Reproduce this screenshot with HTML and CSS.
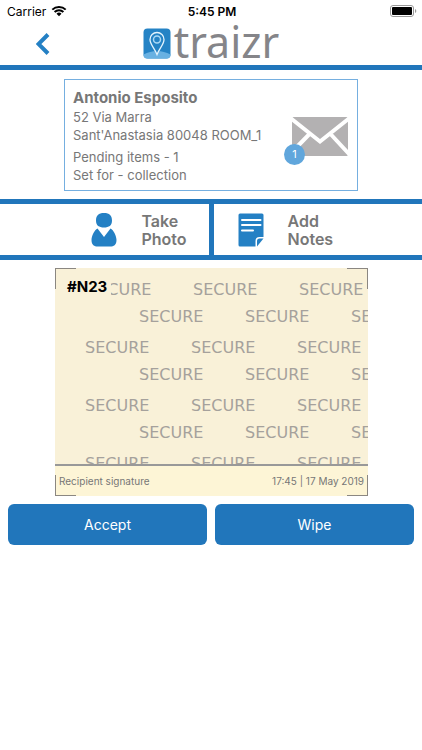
FILE: index.html
```html
<!DOCTYPE html>
<html lang="en">
<head>
<meta charset="utf-8">
<meta name="viewport" content="width=device-width, initial-scale=1">
<title>traizr</title>
<link rel="stylesheet" href="styles.css">
</head>
<body>
<div class="status">
  <div class="carrier">Carrier
    <svg width="16" height="12" viewBox="0 0 16 12" aria-hidden="true"><path d="M1.300 4.600a9.600 9.600 0 0 1 13.400 0M3.600 7a6.300 6.300 0 0 1 8.800 0" fill="none" stroke="#000" stroke-width="2"/><path d="M8 11.300 5.500 8.800a3.600 3.600 0 0 1 5 0z"/></svg>
  </div>
  <div class="clock">5:45 PM</div>
  <div class="battery">
    <svg width="27" height="12" viewBox="0 0 27 12" aria-hidden="true"><rect x=".5" y=".5" width="23" height="11" rx="2.500" fill="#fff" stroke="#999"/><rect x="2" y="2" width="20" height="8" rx="1"/><path d="M25 4v4q1.300-.5 1.300-2T25 4" fill="#999"/></svg>
  </div>
</div>
<header class="header">
  <button class="back" type="button" aria-label="Back">
    <svg width="14" height="22" viewBox="0 0 14 22" aria-hidden="true"><path d="M12 1.500 2.500 11 12 20.500" fill="none" stroke="#2480c4" stroke-width="4"/></svg>
  </button>
  <div class="brand">
    <svg width="28" height="31" viewBox="0 0 28 31" aria-hidden="true"><rect x=".5" y=".5" width="27" height="30" rx="4" fill="#2583c5"/><path d="M.5 26.500Q7 23 14 23t13.500 3.500a4 4 0 0 1-4 4h-19a4 4 0 0 1-4-4z" fill="#69b1e2"/><path d="M14 26.500C11.500 20 7 16.500 7 11.500a7 7 0 0 1 14 0c0 5-4.500 8.500-7 15z" fill="#2583c5" stroke="#e5f4fd" stroke-width="1.300"/><circle cx="14" cy="11.500" r="3.500" fill="#2583c5" stroke="#a9d8f5" stroke-width="1.500"/></svg>
    <span class="brand-name">traizr</span>
  </div>
</header>
<main>
  <section class="card">
    <div class="details">
      <h1>Antonio Esposito</h1>
      <p>52 Via Marra</p>
      <p>Sant'Anastasia 80048 ROOM_1</p>
      <p class="pending">Pending items - 1</p>
      <p>Set for - collection</p>
    </div>
    <div class="mail">
      <svg width="56" height="39" viewBox="0 0 56 39" aria-hidden="true"><rect width="56" height="39" rx="1.500" fill="#b3b1b2"/><path d="M-1 1.500 28 24.500 57 1.500M17.500 17-1 36M38.500 17 58 38" fill="none" stroke="#fff" stroke-width="4"/></svg>
      <span class="badge">1</span>
    </div>
  </section>
  <nav class="actions">
    <button type="button">
      <svg width="26" height="34" viewBox="0 0 26 34" aria-hidden="true"><path d="M13 0c5.500 0 8 2.500 8 7.500S18 14.500 13 14.500 5 12.500 5 7.500 7.500 0 13 0M6.500 15.500 13 24l6.500-8.500c3 1.500 6 7.500 6 11.500 0 5-3 6.500-6 6.500h-13c-3 0-6-1.500-6-6.500 0-4 3-10 6-11.500" fill="#2480c4"/></svg>
      <span class="label">Take<br>Photo</span>
    </button>
    <button type="button">
      <svg width="26" height="34" viewBox="0 0 26 34" aria-hidden="true"><path d="M2 .5h22a1.500 1.500 0 0 1 1.500 1.500v22h-4q-4 0-4 4v5.500H2A1.500 1.500 0 0 1 .5 32V2A1.500 1.500 0 0 1 2 .5M25.500 25.500l-6.500 8V28q0-2.500 2.500-2.500z" fill="#2480c4"/><path d="M4 7h18.500M4 12h18.500M4 17.500h11" stroke="#fff" stroke-width="2" stroke-linecap="round"/></svg>
      <span class="label">Add<br>Notes</span>
    </button>
  </nav>
  <section class="pad" aria-label="Signature">
    <div class="canvas">
      <div class="row r1"><span>SECURE</span><span>SECURE</span><span>SECURE</span></div>
      <div class="row even"><span>SECURE</span><span>SECURE</span><span>SECURE</span></div>
      <div class="row"><span>SECURE</span><span>SECURE</span><span>SECURE</span></div>
      <div class="row even"><span>SECURE</span><span>SECURE</span><span>SECURE</span></div>
      <div class="row"><span>SECURE</span><span>SECURE</span><span>SECURE</span></div>
      <div class="row even"><span>SECURE</span><span>SECURE</span><span>SECURE</span></div>
      <div class="row"><span>SECURE</span><span>SECURE</span><span>SECURE</span></div>
      <strong class="tag">#N23</strong>
    </div>
    <div class="caption"><span>Recipient signature</span><span>17:45 | 17 May 2019</span></div>
    <i class="corner tl"></i><i class="corner tr"></i><i class="corner bl"></i><i class="corner br"></i>
  </section>
  <div class="buttons">
    <button type="button">Accept</button>
    <button type="button">Wipe</button>
  </div>
</main>
</body>
</html>
```
FILE: styles.css
```css
* { box-sizing: border-box; }
body {
  margin: 0;
  background: #fff;
  color: #777;
  font-family: Inter, "Liberation Sans", sans-serif;
  font-size: 13px;
}
button { font: inherit; border: 0; padding: 0; cursor: pointer; }
h1, p { margin: 0; }
svg { display: block; flex: none; }

.status {
  display: grid;
  grid-template-columns: 1fr auto 1fr;
  align-items: center;
  height: 22px;
  padding: 0 5px 0 7px;
  color: #000;
  font-size: 12px;
}
.carrier { display: flex; align-items: center; gap: 5px; }
.clock { font-weight: 600; }
.battery { justify-self: end; }

.header {
  display: grid;
  grid-template-columns: 1fr auto 1fr;
  align-items: center;
  height: 48px;
  border-bottom: 5px solid #2176bb;
}
.back { justify-self: start; margin-left: 36px; background: none; }
.brand { display: flex; align-items: center; gap: 3px; }
.brand-name {
  padding-bottom: 4px;
  color: #858589;
  font-family: "Noto Sans", sans-serif;
  font-size: 43px;
  line-height: 38px;
}

.card {
  display: flex;
  justify-content: space-between;
  align-items: center;
  margin: 9px 64px 8px;
  padding: 8px 9px 6px 8px;
  border: 1px solid #75afe0;
}
.details { line-height: 18px; white-space: nowrap; }
.details h1 { font-size: 15px; line-height: 20px; font-weight: 700; }
.pending { margin-top: 4px; }
.mail { position: relative; }
.badge {
  position: absolute;
  left: -8px;
  bottom: -9px;
  width: 21px;
  border-radius: 50%;
  background: #60a6dc;
  color: #fff;
  font-size: 11px;
  line-height: 21px;
  text-align: center;
}

.actions {
  display: grid;
  grid-template-columns: 1fr 1fr;
  gap: 5px;
  padding: 5px 0;
  background: #2176bb;
}
.actions button {
  display: flex;
  align-items: center;
  gap: 24px;
  height: 51px;
  padding-left: 24px;
  background: #fff;
  color: #777;
  font-size: 16px;
  line-height: 18px;
  font-weight: 600;
  text-align: left;
}
.actions button:first-child { justify-content: flex-end; padding-right: 22px; }

.pad { position: relative; margin: 8px 54px 8px 55px; background: #fdf5d6; }
.canvas {
  position: relative;
  height: 198px;
  overflow: hidden;
  padding-top: 7px;
  border-bottom: 2px solid #999;
  background: #f9f1d8;
}
.row {
  display: flex;
  height: 29px;
  padding-left: 30px;
  color: #a5a19c;
  font-family: "DejaVu Sans", sans-serif;
  font-size: 16px;
  line-height: 30px;
}
.row span { flex: none; width: 106px; }
.row.r1 { padding-left: 32px; }
.row.even { padding-left: 84px; line-height: 26px; }
.tag {
  position: absolute;
  left: 8px;
  top: 7px;
  padding: 0 4px;
  background: #f9f1d8;
  color: #000;
  font-size: 15px;
  line-height: 24px;
  font-weight: 700;
}
.caption {
  display: flex;
  justify-content: space-between;
  padding: 0 4px;
  font-size: 10px;
  line-height: 30px;
}
.corner { position: absolute; width: 21px; height: 21px; border: 0 solid #8b8781; }
.tl { top: 0; left: 0; border-width: 1px 0 0 1px; }
.tr { top: 0; right: 0; border-width: 1px 1px 0 0; }
.bl { bottom: 0; left: 0; border-width: 0 0 1px 1px; }
.br { bottom: 0; right: 0; border-width: 0 1px 1px 0; }

.buttons {
  display: grid;
  grid-template-columns: 1fr 1fr;
  gap: 8px;
  padding: 0 8px;
}
.buttons button {
  height: 41px;
  border-radius: 6px;
  background: #2176bb;
  color: #fff;
  font-size: 14px;
}
```
